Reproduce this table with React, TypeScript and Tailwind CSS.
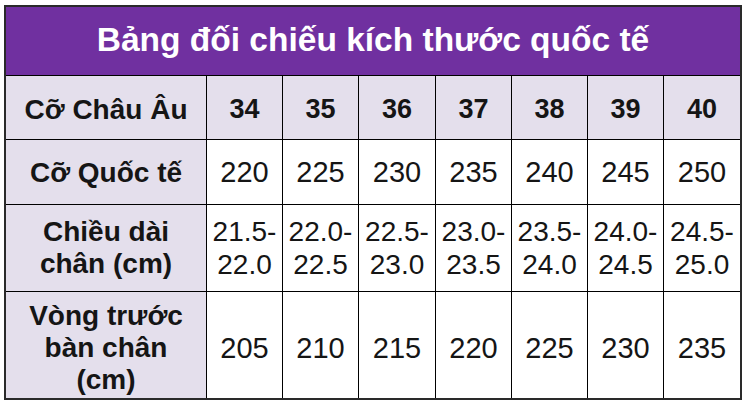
import React from "react";

const sizes = ["34", "35", "36", "37", "38", "39", "40"];
const intl = ["220", "225", "230", "235", "240", "245", "250"];
const lengths = [
  ["21.5-", "22.0"],
  ["22.0-", "22.5"],
  ["22.5-", "23.0"],
  ["23.0-", "23.5"],
  ["23.5-", "24.0"],
  ["24.0-", "24.5"],
  ["24.5-", "25.0"],
];
const girth = ["205", "210", "215", "220", "225", "230", "235"];

function Label({ lines, pad }: { lines: string[]; pad: string }) {
  return (
    <div className={`bg-[#e4dfec] flex flex-col items-center justify-center text-center font-bold text-[28px] leading-[32px] text-[#151515] ${pad}`}>
      {lines.map((l, i) => (
        <span key={i}>{l}</span>
      ))}
    </div>
  );
}

export default function App() {
  return (
    <div className="w-[745px] h-[406px] bg-white" style={{ fontFamily: '"Liberation Sans", Arial, sans-serif' }}>
      <div className="ml-[4px] pt-[5px]">
        <div className="w-[738px] border-2 border-[#2a2a2a] bg-black">
          <div className="grid grid-cols-[200px_75px_75px_76px_75px_75px_75px_76px] grid-rows-[68px_63px_64px_86px_106px] gap-px">
            <div className="col-span-8 bg-[#7030a0] flex items-center justify-center text-white font-bold text-[33.5px] pb-[1px]">
              Bảng đối chiếu kích thước quốc tế
            </div>

            <Label lines={["Cỡ Châu Âu"]} pad="pt-[4px]" />
            {sizes.map((s) => (
              <div key={s} className="bg-[#e4dfec] flex items-center justify-center font-bold text-[27px] text-[#151515] pt-[4px]">
                {s}
              </div>
            ))}

            <Label lines={["Cỡ Quốc tế"]} pad="pt-[2px]" />
            {intl.map((s, i) => (
              <div key={i} className="bg-white flex items-center justify-center text-[29px] text-[#151515] pt-[2px]">
                {s}
              </div>
            ))}

            <Label lines={["Chiều dài", "chân (cm)"]} pad="" />
            {lengths.map((l, i) => (
              <div key={i} className="bg-white flex flex-col items-center justify-center text-[28px] leading-[33px] text-[#151515]">
                <span>{l[0]}</span>
                <span>{l[1]}</span>
              </div>
            ))}

            <Label lines={["Vòng trước", "bàn chân", "(cm)"]} pad="pt-[6px]" />
            {girth.map((s, i) => (
              <div key={i} className="bg-white flex items-center justify-center text-[29px] text-[#151515] pt-[8px]">
                {s}
              </div>
            ))}
          </div>
        </div>
      </div>
    </div>
  );
}
